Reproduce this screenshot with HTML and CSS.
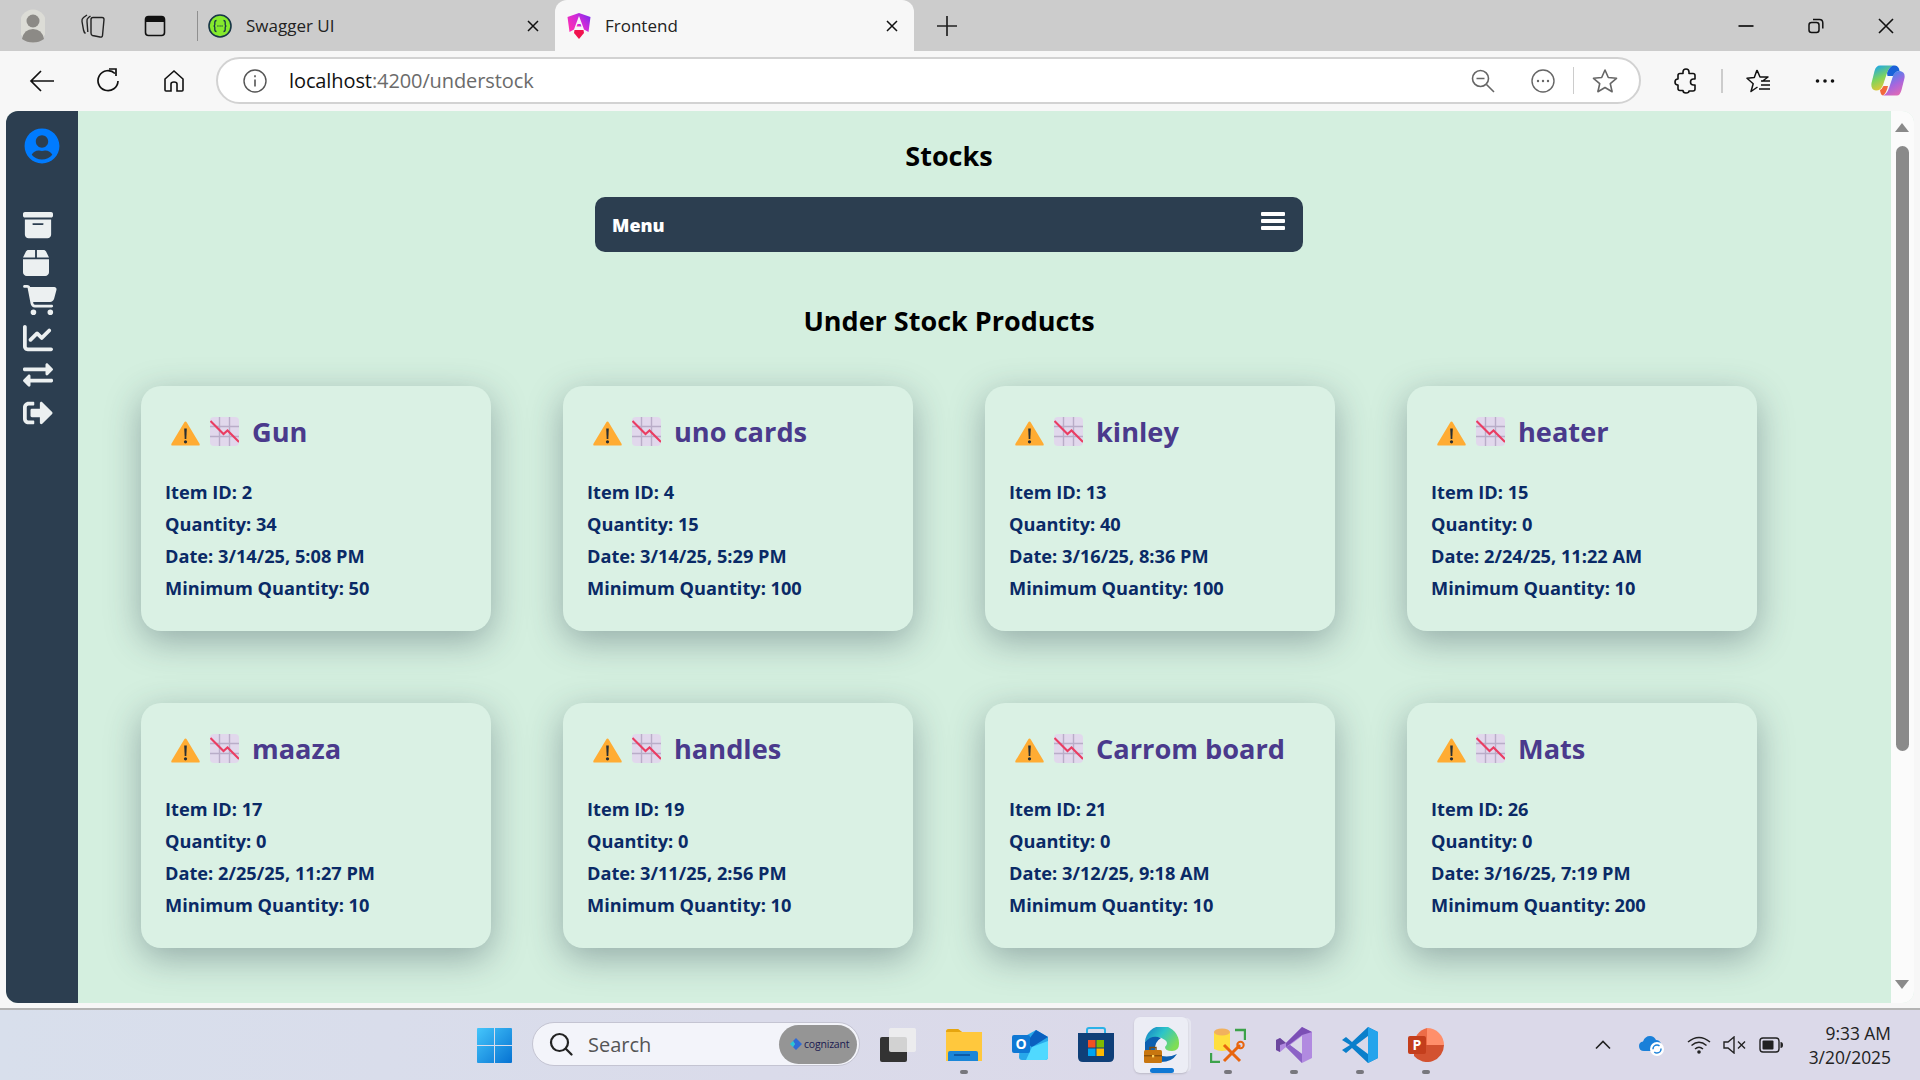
FILE: index.html
```html
<!DOCTYPE html>
<html lang="en">
<head>
  <meta charset="UTF-8">
  <meta name="viewport" content="width=device-width, initial-scale=1.0">
  <title>Frontend</title>
  <link rel="stylesheet" href="styles.css">
</head>
<body>
  <!-- shared icons for the cards -->
  <svg class="sprite" xmlns="http://www.w3.org/2000/svg">
    <symbol id="warn" viewBox="0 0 29 25">
      <path d="M14.5 0.5 Q15.2 0.5 15.8 1.6 L28.4 22.6 Q29.4 24.6 27.4 24.6 H1.6 Q-0.4 24.6 0.6 22.6 L13.2 1.6 Q13.8 0.5 14.5 0.5Z" fill="#ffac33"/>
      <path d="M13.2 7.5 h2.6 l-0.5 10.5 h-1.6z" fill="#292f33"/>
      <circle cx="14.5" cy="20.8" r="1.6" fill="#292f33"/>
    </symbol>
    <symbol id="drop" viewBox="0 0 29 29">
      <rect width="29" height="29" rx="4" fill="#e1d8ec"/>
      <path d="M9.5 0v29M19.5 0v29M0 9.5h29M0 19.5h29" stroke="#b9adc8" stroke-width="1.4" fill="none"/>
      <path d="M0.5 4 L13.5 17 L17.5 13.5 L29 25" stroke="#ea3d62" stroke-width="2.1" fill="none"/>
    </symbol>
  </svg>

  <div class="tabstrip">
    <div class="strip-btn first">
      <svg width="24" height="34" viewBox="0 0 24 34"><ellipse cx="12" cy="17" rx="14" ry="16.5" fill="#dcdcd6"/><circle cx="12" cy="12" r="6.5" fill="#8c8a86"/><path d="M1 30 Q3 20 12 20 Q21 20 23 30 Q18 33.5 12 33.5 Q6 33.5 1 30Z" fill="#8c8a86"/></svg>
    </div>
    <div class="strip-btn wide">
      <svg width="26" height="26" viewBox="0 0 26 26" fill="none" stroke="#222" stroke-width="1.4" stroke-linejoin="round"><path d="M11 6.5 Q11 4.5 13 4.5 H22 Q24 4.5 24 6.5 L22.5 22.5 Q22.3 24.5 20 24 L12.5 22.5 Q11 22 11 20Z"/><path d="M10.5 3 L8.5 4.5 Q6.5 6 7 8.5 L7.8 19"/><path d="M7 2 L3.5 4.5 Q1.5 6 2 8.5 L3.5 17 Q4 19.5 5.5 20.5"/></svg>
    </div>
    <div class="strip-btn tabs-btn">
      <svg width="22" height="22" viewBox="0 0 22 22"><rect x="1.5" y="1.5" width="19" height="19" rx="3" fill="none" stroke="#111" stroke-width="1.6"/><path d="M1.5 4.5 Q1.5 1.5 4.5 1.5 H17.5 Q20.5 1.5 20.5 4.5 V7 H1.5Z" fill="#111"/></svg>
    </div>
    <span class="strip-sep"></span>
    <div class="tab">
      <svg class="favicon" width="24" height="24" viewBox="0 0 24 24"><circle cx="12" cy="12" r="11" fill="#85ea2d" stroke="#173647" stroke-width="1.6"/><path d="M8.5 6.5 Q6.8 6.5 6.8 8.5 V10.5 Q6.8 12 5.6 12 Q6.8 12 6.8 13.5 V15.5 Q6.8 17.5 8.5 17.5M15.5 6.5 Q17.2 6.5 17.2 8.5 V10.5 Q17.2 12 18.4 12 Q17.2 12 17.2 13.5 V15.5 Q17.2 17.5 15.5 17.5" fill="none" stroke="#173647" stroke-width="1.3"/><path d="M9.5 12h.9M11.6 12h.9M13.6 12h.9" stroke="#173647" stroke-width="1.3"/></svg>
      <span class="tab-title">Swagger UI</span>
      <svg class="tab-x" width="14" height="14" viewBox="0 0 14 14"><path d="M2 2l10 10M12 2L2 12" stroke="#111" stroke-width="1.5"/></svg>
    </div>
    <div class="tab active">
      <svg class="favicon" width="24" height="28" viewBox="0 0 24 28">
        <defs><linearGradient id="ang" x1="0" y1="0.8" x2="1" y2="0.1"><stop offset="0" stop-color="#ff2fb0"/><stop offset="0.55" stop-color="#d02ad8"/><stop offset="1" stop-color="#7a2bf0"/></linearGradient></defs>
        <path d="M12 1 L0.5 5 L2.5 20 L7 17.5 L9 12 L12 4 L15 12 L17 17.5 L21.5 20 L23.5 5Z" fill="url(#ang)"/>
        <path d="M10.5 12 H13.5 L14.5 14.5 H9.5Z" fill="url(#ang)"/>
        <path d="M7.5 18 H16.5 L17 21 L12 27 L7 21Z" fill="#f0134f"/>
      </svg>
      <span class="tab-title">Frontend</span>
      <svg class="tab-x" width="14" height="14" viewBox="0 0 14 14"><path d="M2 2l10 10M12 2L2 12" stroke="#111" stroke-width="1.5"/></svg>
    </div>
    <div class="strip-btn plus">
      <svg width="22" height="22" viewBox="0 0 22 22"><path d="M11 1v20M1 11h20" stroke="#222" stroke-width="1.7"/></svg>
    </div>
    <div class="window-btns">
      <svg width="16" height="16" viewBox="0 0 16 16"><path d="M0.5 8h15" stroke="#111" stroke-width="1.7"/></svg>
      <svg width="16" height="16" viewBox="0 0 16 16" fill="none" stroke="#111" stroke-width="1.5"><rect x="1" y="4.5" width="10" height="10" rx="2.5"/><path d="M5 1.5 H11.5 Q14.8 1.5 14.8 5 V10.5"/></svg>
      <svg width="16" height="16" viewBox="0 0 16 16"><path d="M1 1l14 14M15 1L1 15" stroke="#111" stroke-width="1.6"/></svg>
    </div>
  </div>

  <div class="toolbar">
    <div class="tool-btn">
      <svg width="26" height="24" viewBox="0 0 26 24" fill="none" stroke="#111" stroke-width="1.7"><path d="M25 12H2M12 2L2 12l10 10"/></svg>
    </div>
    <div class="tool-btn">
      <svg width="24" height="26" viewBox="0 0 24 26" fill="none" stroke="#111" stroke-width="1.7"><path d="M19 5.5 A10 10 0 1 0 22 13"/><path d="M13 1 H20 V8"/></svg>
    </div>
    <div class="tool-btn">
      <svg width="24" height="24" viewBox="0 0 24 24" fill="none" stroke="#111" stroke-width="1.6"><path d="M3 10 L12 2 L21 10 V21 Q21 22 20 22 H15 V15 Q15 13 12 13 Q9 13 9 15 V22 H4 Q3 22 3 21Z"/></svg>
    </div>
    <div class="address">
      <svg class="addr-info" width="24" height="24" viewBox="0 0 24 24" fill="none" stroke="#555" stroke-width="1.4"><circle cx="12" cy="12" r="11"/><path d="M12 10.5v7M12 6.3v2" stroke-width="1.6"/></svg>
      <span class="url"><span class="url-host">localhost</span>:4200/understock</span>
      <div class="addr-icons">
        <svg width="24" height="24" viewBox="0 0 24 24" fill="none" stroke="#666" stroke-width="1.6"><circle cx="9.5" cy="9.5" r="8"/><path d="M5.5 9.5h8M15.5 15.5l7.5 7.5"/></svg>
        <svg class="dots-ring" width="24" height="24" viewBox="0 0 24 24"><circle cx="12" cy="12" r="11" fill="none" stroke="#666" stroke-width="1.4"/><circle cx="7" cy="12" r="1.2" fill="#666"/><circle cx="12" cy="12" r="1.2" fill="#666"/><circle cx="17" cy="12" r="1.2" fill="#666"/></svg>
        <span class="addr-sep"></span>
        <svg width="26" height="26" viewBox="0 0 26 26" fill="none" stroke="#666" stroke-width="1.6" stroke-linejoin="round"><path d="M13 2 L16.3 9.5 L24.5 10.3 L18.3 15.7 L20.1 23.7 L13 19.5 L5.9 23.7 L7.7 15.7 L1.5 10.3 L9.7 9.5Z"/></svg>
      </div>
    </div>
    <div class="tool-right">
      <svg class="ext" width="24" height="26" viewBox="0 0 24 26" fill="none" stroke="#111" stroke-width="1.6" stroke-linejoin="round"><path d="M9 4 Q9 1 12 1 Q15 1 15 4 V5.5 H19 Q21 5.5 21 7.5 V11 H19.5 Q16.5 11 16.5 14 Q16.5 17 19.5 17 H21 V21 Q21 23 19 23 H15 Q15 25 12 25 Q9 25 9 22.5 H6 Q4 22.5 4 20.5 V17 Q1 17 1 14 Q1 11 4 11 V7.5 Q4 5.5 6 5.5 H9Z"/></svg>
      <span class="tool-sep"></span>
      <svg class="favs" width="26" height="26" viewBox="0 0 26 26" fill="none" stroke="#111" stroke-width="1.5" stroke-linejoin="round"><path d="M11 2 L14 9 H22 L16 13.5 M11.5 19 L5 23.5 L7.2 15.7 L1 10.3 L8.3 9.5 L11 2M15 13h9M15 17h9M13 21h11"/></svg>
      <svg class="more" width="20" height="6" viewBox="0 0 20 6"><circle cx="2.5" cy="3" r="1.8" fill="#111"/><circle cx="10" cy="3" r="1.8" fill="#111"/><circle cx="17.5" cy="3" r="1.8" fill="#111"/></svg>
      <svg class="copilot" width="34" height="31" viewBox="0 0 34 31">
        <defs>
          <linearGradient id="cop1" x1="0.2" y1="0" x2="0.6" y2="1"><stop offset="0" stop-color="#1aa6ee"/><stop offset="0.5" stop-color="#7fd45c"/><stop offset="1" stop-color="#f6c42f"/></linearGradient>
          <linearGradient id="cop2" x1="0.3" y1="0" x2="0.8" y2="1"><stop offset="0" stop-color="#2f8df2"/><stop offset="0.55" stop-color="#a866dd"/><stop offset="1" stop-color="#e86ab0"/></linearGradient>
        </defs>
        <path d="M9 0.5 H22 Q18 2 16 8 L12 20 Q10 25.5 5 25.5 Q-0.5 25 0.5 18 L3.5 6 Q5 0.5 9 0.5Z" fill="url(#cop1)"/>
        <path d="M26 30.5 H12 Q16 29 18 23 L22 11 Q23.5 6 29 6 Q34.5 7 33.5 13 L30.5 25 Q29 30.5 26 30.5Z" fill="url(#cop2)"/>
        <path d="M9 25 Q11 24 12.5 21 L17 21 Q15.5 28 12 30.5 Q9.5 30 9 25Z" fill="#f2683c"/>
        <path d="M16 8 Q18 2 22 0.5 H24 Q28 1 28.5 6 Q24 6 22 11 H16.5Z" fill="#1a62d8"/>
      </svg>
    </div>
  </div>

  <div class="viewport">
    <nav class="sidebar">
      <svg class="side-avatar" width="36" height="36" viewBox="0 0 496 512"><path fill="#007bff" d="M248 8C111 8 0 119 0 256s111 248 248 248 248-111 248-248S385 8 248 8zm0 96c48.6 0 88 39.4 88 88s-39.4 88-88 88-88-39.4-88-88 39.4-88 88-88zm0 344c-58.7 0-111.3-26.6-146.5-68.2 18.8-35.4 55.6-59.8 98.5-59.8 2.4 0 4.8.4 7.1 1.1 13 4.2 26.6 6.9 40.9 6.9 14.3 0 28-2.7 40.9-6.9 2.3-.7 4.7-1.1 7.1-1.1 42.9 0 79.7 24.4 98.5 59.8C359.3 421.4 306.7 448 248 448z"/></svg>
      <div class="side-links">
        <svg width="30" height="30" viewBox="0 0 512 512"><path d="M32 32H480c17.7 0 32 14.3 32 32V96c0 17.7-14.3 32-32 32H32C14.3 128 0 113.7 0 96V64C0 46.3 14.3 32 32 32zm0 128H480V416c0 35.3-28.7 64-64 64H96c-35.3 0-64-28.7-64-64V160zm128 80c0 8.8 7.2 16 16 16H336c8.8 0 16-7.2 16-16s-7.2-16-16-16H176c-8.8 0-16 7.2-16 16z"/></svg>
        <svg width="26" height="30" viewBox="0 0 448 512"><path d="M50.7 58.5L0 160H208V32H93.7C75.5 32 58.9 42.3 50.7 58.5zM240 160H448L397.3 58.5C389.1 42.3 372.5 32 354.3 32H240V160zm208 32H0V416c0 35.3 28.7 64 64 64H384c35.3 0 64-28.7 64-64V192z"/></svg>
        <svg width="34" height="30" viewBox="0 0 576 512"><path d="M0 24C0 10.7 10.7 0 24 0H69.5c22 0 41.5 12.8 50.6 32h411c26.3 0 45.5 25 38.6 50.4l-41 152.3c-8.5 31.4-37 53.3-69.5 53.3H170.7l5.4 28.5c2.2 11.3 12.1 19.5 23.6 19.5H488c13.3 0 24 10.7 24 24s-10.7 24-24 24H199.7c-34.6 0-64.3-24.6-70.7-58.5L77.4 54.5c-.7-3.8-4-6.5-7.9-6.5H24C10.7 48 0 37.3 0 24zM128 464a48 48 0 1 1 96 0 48 48 0 1 1 -96 0zm336-48a48 48 0 1 1 0 96 48 48 0 1 1 0-96z"/></svg>
        <svg width="30" height="30" viewBox="0 0 512 512"><path d="M64 64c0-17.7-14.3-32-32-32S0 46.3 0 64V400c0 44.2 35.8 80 80 80H480c17.7 0 32-14.3 32-32s-14.3-32-32-32H80c-8.8 0-16-7.2-16-16V64zm406.6 86.6c12.5-12.5 12.5-32.8 0-45.3s-32.8-12.5-45.3 0L320 210.7l-57.4-57.4c-12.5-12.5-32.8-12.5-45.3 0l-112 112c-12.5 12.5-12.5 32.8 0 45.3s32.8 12.5 45.3 0L240 221.3l57.4 57.4c12.5 12.5 32.8 12.5 45.3 0l128-128z"/></svg>
        <svg width="30" height="30" viewBox="0 0 512 512"><path d="M0 168v-16c0-13.255 10.745-24 24-24h360V80c0-21.367 25.899-32.042 40.971-16.971l80 80c9.372 9.373 9.372 24.569 0 33.941l-80 80C409.956 271.982 384 261.456 384 240v-48H24c-13.255 0-24-10.745-24-24zm488 152H128v-48c0-21.314-25.862-32.08-40.971-16.971l-80 80c-9.372 9.373-9.372 24.569 0 33.941l80 80C102.057 463.997 128 453.437 128 432v-48h360c13.255 0 24-10.745 24-24v-16c0-13.255-10.745-24-24-24z"/></svg>
        <svg width="30" height="30" viewBox="0 0 512 512"><path d="M497 273L329 441c-15 15-41 4.5-41-17v-96H152c-13.3 0-24-10.7-24-24v-96c0-13.3 10.7-24 24-24h136V88c0-21.4 25.9-32 41-17l168 168c9.3 9.4 9.3 24.6 0 34zM192 436v-40c0-6.6-5.4-12-12-12H96c-17.7 0-32-14.3-32-32V160c0-17.7 14.3-32 32-32h84c6.6 0 12-5.4 12-12V76c0-6.6-5.4-12-12-12H96c-53 0-96 43-96 96v192c0 53 43 96 96 96h84c6.6 0 12-5.4 12-12z"/></svg>
      </div>
    </nav>

    <main class="content">
      <h2 class="page-title">Stocks</h2>
      <div class="menu-bar">
        <span class="menu-label">Menu</span>
        <span class="burger"><i></i><i></i><i></i></span>
      </div>
      <h2 class="section-title">Under Stock Products</h2>

      <div class="card-grid">
        <div class="card">
          <h3 class="card-title"><svg class="ic-warn"><use href="#warn"/></svg><svg class="ic-drop"><use href="#drop"/></svg>Gun</h3>
          <p>Item ID: 2</p><p>Quantity: 34</p><p>Date: 3/14/25, 5:08 PM</p><p>Minimum Quantity: 50</p>
        </div>
        <div class="card">
          <h3 class="card-title"><svg class="ic-warn"><use href="#warn"/></svg><svg class="ic-drop"><use href="#drop"/></svg>uno cards</h3>
          <p>Item ID: 4</p><p>Quantity: 15</p><p>Date: 3/14/25, 5:29 PM</p><p>Minimum Quantity: 100</p>
        </div>
        <div class="card">
          <h3 class="card-title"><svg class="ic-warn"><use href="#warn"/></svg><svg class="ic-drop"><use href="#drop"/></svg>kinley</h3>
          <p>Item ID: 13</p><p>Quantity: 40</p><p>Date: 3/16/25, 8:36 PM</p><p>Minimum Quantity: 100</p>
        </div>
        <div class="card">
          <h3 class="card-title"><svg class="ic-warn"><use href="#warn"/></svg><svg class="ic-drop"><use href="#drop"/></svg>heater</h3>
          <p>Item ID: 15</p><p>Quantity: 0</p><p>Date: 2/24/25, 11:22 AM</p><p>Minimum Quantity: 10</p>
        </div>
        <div class="card">
          <h3 class="card-title"><svg class="ic-warn"><use href="#warn"/></svg><svg class="ic-drop"><use href="#drop"/></svg>maaza</h3>
          <p>Item ID: 17</p><p>Quantity: 0</p><p>Date: 2/25/25, 11:27 PM</p><p>Minimum Quantity: 10</p>
        </div>
        <div class="card">
          <h3 class="card-title"><svg class="ic-warn"><use href="#warn"/></svg><svg class="ic-drop"><use href="#drop"/></svg>handles</h3>
          <p>Item ID: 19</p><p>Quantity: 0</p><p>Date: 3/11/25, 2:56 PM</p><p>Minimum Quantity: 10</p>
        </div>
        <div class="card">
          <h3 class="card-title"><svg class="ic-warn"><use href="#warn"/></svg><svg class="ic-drop"><use href="#drop"/></svg>Carrom board</h3>
          <p>Item ID: 21</p><p>Quantity: 0</p><p>Date: 3/12/25, 9:18 AM</p><p>Minimum Quantity: 10</p>
        </div>
        <div class="card">
          <h3 class="card-title"><svg class="ic-warn"><use href="#warn"/></svg><svg class="ic-drop"><use href="#drop"/></svg>Mats</h3>
          <p>Item ID: 26</p><p>Quantity: 0</p><p>Date: 3/16/25, 7:19 PM</p><p>Minimum Quantity: 200</p>
        </div>
      </div>
    </main>

    <div class="scrollbar">
      <span class="arrow-up"></span>
      <span class="thumb"></span>
      <span class="arrow-down"></span>
    </div>
  </div>

  <footer class="taskbar">
    <div class="task-item">
      <svg width="35" height="35" viewBox="0 0 35 35">
        <defs><linearGradient id="win" x1="0" y1="0" x2="1" y2="1"><stop offset="0" stop-color="#45c6fb"/><stop offset="1" stop-color="#0672d2"/></linearGradient></defs>
        <path d="M1 0H17V17H0V1Q0 0 1 0ZM18 0H34Q35 0 35 1V17H18ZM0 18H17V35H1Q0 35 0 34ZM18 18H35V34Q35 35 34 35H18Z" fill="url(#win)"/>
      </svg>
    </div>
    <div class="search">
      <svg width="24" height="24" viewBox="0 0 24 24" fill="none" stroke="#222" stroke-width="2.2"><circle cx="10.5" cy="10.5" r="8.5"/><path d="M16.8 16.8 L22.5 22.5" stroke-linecap="round"/></svg>
      <span class="search-text">Search</span>
      <span class="search-pill">
        <svg width="12" height="12" viewBox="0 0 12 12"><path d="M6 0L12 6L6 12L3 9L5 6L3 3Z" fill="#2f6bd6"/><path d="M3 3L0 6L3 9L5 6Z" fill="#26c6da"/></svg>
        <span class="pill-text">cognizant</span>
      </span>
    </div>
    <div class="task-item">
      <svg width="36" height="34" viewBox="0 0 36 34"><rect x="0" y="9" width="27" height="25" rx="2" fill="#333"/><rect x="9" y="0" width="27" height="24" rx="2" fill="#eeeeef" opacity="0.85"/></svg>
    </div>
    <div class="task-item running">
      <svg width="36" height="32" viewBox="0 0 36 32"><path d="M0 3 Q0 0 3 0 H12 L16 3 H36 V32 H0Z" fill="#ffc83d"/><path d="M0 3 Q0 0 3 0 H12 L16 3 H0Z" fill="#e6a50f"/><path d="M2 32 V24 Q2 22 4 22 H30 Q32 22 32 24 V32Z" fill="#1a86d8"/><path d="M8 26h16" stroke="#0c5aa6" stroke-width="2"/></svg>
    </div>
    <div class="task-item">
      <svg width="36" height="32" viewBox="0 0 36 32"><path d="M8 10 L24 1 L36 8 V28 Q36 31 33 31 H10 Q7 31 7 28Z" fill="#28a8ea"/><path d="M14 14 L24 1 L36 8 L20 18Z" fill="#0a5fbf"/><path d="M14 31 L20 18 L36 12 V28 Q36 31 33 31Z" fill="#50d9ff"/><rect x="0" y="6" width="18" height="18" rx="2" fill="#0f78d4"/><text x="9" y="20" class="app-letter" text-anchor="middle">O</text></svg>
    </div>
    <div class="task-item">
      <svg width="36" height="36" viewBox="0 0 36 36"><path d="M9 7 V3 Q9 1 11 1 H25 Q27 1 27 3 V7" fill="none" stroke="#2bb2e8" stroke-width="2"/><path d="M0 6 H36 V30 Q36 35 31 35 H5 Q0 35 0 30Z" fill="#0f3f78"/><rect x="10" y="13" width="7.5" height="7.5" fill="#f25022"/><rect x="18.5" y="13" width="7.5" height="7.5" fill="#7fba00"/><rect x="10" y="21.5" width="7.5" height="7.5" fill="#00a4ef"/><rect x="18.5" y="21.5" width="7.5" height="7.5" fill="#ffb900"/></svg>
    </div>
    <div class="task-item active-app">
      <svg width="36" height="36" viewBox="0 0 36 36">
        <defs><linearGradient id="edge" x1="0" y1="0" x2="1" y2="0.6"><stop offset="0" stop-color="#1278c8"/><stop offset="0.5" stop-color="#2dc4c8"/><stop offset="1" stop-color="#7fdd55"/></linearGradient></defs>
        <path d="M1 15 A17 17 0 0 1 35 17 Q35 24 28 24 Q21 24 21 20 Q25 16 21 13 Q12 6 1 15Z" fill="url(#edge)"/>
        <path d="M1 15 Q8 7 17 11 Q10 15 11 24 H1Z" fill="#0c5fb0"/>
        <path d="M13 27 Q22 32 33 27 Q28 35 17 35 H12Z" fill="#0c5fb0"/>
        <rect x="0" y="23" width="18" height="13" rx="1.5" fill="#c8760f"/><path d="M6 23v-2.5h6V23" fill="none" stroke="#7c4a0c" stroke-width="1.4"/><rect x="0" y="28" width="18" height="1.4" fill="#8c5208"/><rect x="8" y="28" width="2.2" height="2.4" fill="#ffd35c"/>
      </svg>
    </div>
    <div class="task-item running">
      <svg width="36" height="36" viewBox="0 0 36 36"><path d="M25 3h10v10M1 26v9h9" fill="none" stroke="#3ca24a" stroke-width="2.4"/><path d="M4 5 Q12 0 20 5 V22 Q12 26 4 22Z" fill="#ffdf3e"/><ellipse cx="12" cy="5" rx="8" ry="3.5" fill="#f1b15e"/><path d="M14 18 L30 34M30 18 L14 34" stroke="#e8650e" stroke-width="3"/><circle cx="30.5" cy="18" r="3.2" fill="none" stroke="#e8650e" stroke-width="2"/></svg>
    </div>
    <div class="task-item running">
      <svg width="36" height="36" viewBox="0 0 36 36"><path d="M26 0 L36 5 V31 L26 36 L10 20 L4 25 L0 23 V13 L4 11 L10 16Z" fill="#b18ae0"/><path d="M26 0 L36 5 L26 8 L10 20 L10 16Z" fill="#7b4fb5"/><path d="M0 13 L4 11 L10 16 L4 18 V25 L0 23Z" fill="#6c479e"/><path d="M26 9 V27 L14 18Z" fill="#dbd9e9"/><path d="M26 36 L10 20 L14 18 L26 27Z" fill="#8c63c6"/></svg>
    </div>
    <div class="task-item running">
      <svg width="36" height="36" viewBox="0 0 36 36"><path d="M26 0 L36 5 V31 L26 36 L10 21 L4 26 L0 23 L8 18 L0 13 L4 10 L10 15Z" fill="#0a7fcb"/><path d="M26 0 L36 5 V31 L26 36 V9 L26 27 Z" fill="#24a4ec"/><path d="M26 9 V27 L14 18Z" fill="#dbd9e9"/></svg>
    </div>
    <div class="task-item running">
      <svg width="36" height="34" viewBox="0 0 36 34"><path d="M19 0 A17 17 0 0 1 36 17 H19Z" fill="#ff8f6b"/><path d="M19 0 A17 17 0 0 0 6 17 H19Z" fill="#ed6c47"/><path d="M36 17 A17 17 0 0 1 6 28 V17Z" fill="#d35230"/><rect x="0" y="8" width="18" height="18" rx="2" fill="#c43e1c"/><text x="9" y="22" class="app-letter" text-anchor="middle">P</text></svg>
    </div>

    <div class="tray">
      <svg class="tray-chevron" width="16" height="10" viewBox="0 0 16 10"><path d="M1 8.5 L8 1.5 L15 8.5" fill="none" stroke="#222" stroke-width="1.6"/></svg>
      <svg class="tray-cloud" width="26" height="24" viewBox="0 0 26 24"><path d="M5 18 Q0 18 0 13 Q0 9 4 8.5 Q6 3 11 3 Q15 3 17 7 Q21 7 22 11 L14 18Z" fill="#1a80d9"/><circle cx="18" cy="16" r="7" fill="#fff"/><circle cx="18" cy="16" r="4" fill="none" stroke="#1a80d9" stroke-width="1.5" stroke-dasharray="9 3"/></svg>
      <svg class="tray-wifi" width="24" height="20" viewBox="0 0 24 20" fill="none" stroke="#222" stroke-width="1.5"><path d="M1 7 Q12 -2 23 7M4.5 10.5 Q12 4 19.5 10.5M8 14 Q12 10.5 16 14"/><circle cx="12" cy="17" r="1.8" fill="#222" stroke="none"/></svg>
      <svg class="tray-sound" width="24" height="18" viewBox="0 0 24 18" fill="none" stroke="#222" stroke-width="1.4"><path d="M1 6 H5 L11 1 V17 L5 12 H1Z"/><path d="M15 5.5l7 7M22 5.5l-7 7"/></svg>
      <svg class="tray-battery" width="24" height="16" viewBox="0 0 24 16"><rect x="1" y="1" width="19" height="14" rx="3" fill="none" stroke="#222" stroke-width="1.4"/><rect x="3.5" y="3.5" width="11" height="9" rx="1" fill="#222"/><path d="M21.5 5 Q24 5 24 8 Q24 11 21.5 11Z" fill="#222"/></svg>
      <div class="clock">
        <span>9:33 AM</span>
        <span>3/20/2025</span>
      </div>
    </div>
  </footer>
</body>
</html>
```

FILE: styles.css
```css
* {
  box-sizing: border-box;
}

html, body {
  margin: 0;
  height: 1080px;
  overflow: hidden;
}

body {
  display: flex;
  flex-direction: column;
  background-color: #f7f7f7;
  font-family: "Open Sans", "Noto Sans", sans-serif;
}

.sprite {
  display: none;
}

/* browser tabs */
.tabstrip {
  display: flex;
  align-items: center;
  height: 51px;
  background-color: #cccccc;
  padding-left: 9px;
}

.strip-btn {
  display: flex;
  align-items: center;
  justify-content: center;
  width: 48px;
  height: 51px;
}

.strip-btn.wide {
  width: 72px;
}

.strip-btn.tabs-btn {
  width: 52px;
}

.strip-btn.plus {
  width: 66px;
}

.strip-sep {
  width: 1px;
  height: 30px;
  background-color: #8f8f8f;
  margin-left: 16px;
  margin-right: 10px;
}

.tab {
  display: flex;
  align-items: center;
  width: 347px;
  height: 51px;
  padding-right: 15px;
}

.tab.active {
  width: 359px;
  background-color: #f7f7f7;
  border-radius: 12px 12px 0 0;
  padding-left: 12px;
  padding-right: 15px;
}

.favicon {
  flex: none;
}

.tab-title {
  flex: 1;
  margin-left: 14px;
  font-size: 17px;
  color: #222;
}

.window-btns {
  display: flex;
  gap: 54px;
  margin-left: auto;
  padding-right: 26px;
}

/* address row */
.toolbar {
  display: flex;
  align-items: center;
  height: 60px;
  padding-left: 9px;
  padding-bottom: 1px;
  background-color: #f7f7f7;
}

.tool-btn {
  display: flex;
  align-items: center;
  justify-content: center;
  width: 66px;
  height: 46px;
}

.address {
  display: flex;
  align-items: center;
  width: 1425px;
  height: 47px;
  margin-left: 9px;
  padding-left: 25px;
  padding-right: 21px;
  background-color: #fff;
  border: 2px solid #d2d2d2;
  border-radius: 24px;
}

.url {
  margin-left: 22px;
  font-size: 20px;
  letter-spacing: -0.1px;
  color: #6b6b6b;
}

.url-host {
  color: #111;
}

.addr-icons {
  display: flex;
  align-items: center;
  margin-left: auto;
}

.dots-ring {
  margin-left: 36px;
}

.addr-sep {
  width: 1px;
  height: 27px;
  background-color: #ccc;
  margin-left: 18px;
  margin-right: 18px;
}

.tool-right {
  display: flex;
  align-items: center;
  margin-left: 33px;
}

.tool-sep {
  width: 2px;
  height: 24px;
  background-color: #ccc;
  margin-left: 23px;
  margin-right: 23px;
}

.more {
  margin-left: 43px;
}

.copilot {
  margin-left: 36px;
}

/* page area */
.viewport {
  display: flex;
  height: 892px;
  margin-left: 6px;
  margin-right: 6px;
  background-color: #d4efdf;
  border-radius: 12px;
  overflow: hidden;
}

.sidebar {
  flex: none;
  display: flex;
  flex-direction: column;
  width: 72px;
  background-color: #2c3e50;
  padding-left: 17px;
  padding-top: 17px;
}

.side-avatar {
  margin-left: 1px;
}

.side-links {
  display: flex;
  flex-direction: column;
  margin-top: 46px;
}

.side-links svg {
  display: block;
  height: 30px;
  margin-bottom: 7.5px;
  fill: #ecf0f1;
}

.content {
  flex: none;
  width: 1742px;
}

.page-title {
  margin: 26px 0 0;
  height: 38px;
  line-height: 38px;
  text-align: center;
  font-size: 27px;
  font-weight: 700;
  color: #000;
}

.menu-bar {
  display: flex;
  align-items: center;
  justify-content: space-between;
  width: 708px;
  height: 55px;
  margin: 22px auto 0;
  padding: 0 18px 0 17px;
  background-color: #2c3e50;
  border-radius: 10px;
}

.menu-label {
  font-size: 18px;
  font-weight: 800;
  color: #fff;
}

.burger {
  display: flex;
  flex-direction: column;
  gap: 3px;
  width: 24px;
  margin-top: -8px;
}

.burger i {
  display: block;
  height: 4px;
  background-color: #fff;
  border-radius: 1px;
}

.section-title {
  margin: 49px 0 0;
  height: 40px;
  line-height: 40px;
  text-align: center;
  font-size: 27px;
  font-weight: 700;
  color: #000;
}

.card-grid {
  display: grid;
  grid-template-columns: repeat(4, 350px);
  gap: 72px;
  justify-content: center;
  margin-top: 45px;
}

.card {
  height: 245px;
  padding: 18px 24px 0;
  background-color: #daf1e4;
  border-radius: 20px;
  box-shadow: 0 10px 35px rgba(44, 62, 80, 0.38);
}

.card-title {
  display: flex;
  align-items: center;
  height: 54px;
  margin: 0 0 18px;
  font-size: 27.2px;
  font-weight: 700;
  color: #4a3a8c;
}

.ic-warn {
  width: 29px;
  height: 25px;
  margin-left: 6px;
  margin-top: 4px;
}

.ic-drop {
  width: 29px;
  height: 29px;
  margin-left: 10px;
  margin-right: 13px;
}

.card p {
  margin: 0;
  height: 32px;
  line-height: 32px;
  font-size: 18.2px;
  font-weight: 700;
  color: #0a2a66;
}

/* scrollbar */
.scrollbar {
  flex: none;
  position: relative;
  width: 23px;
  margin-left: auto;
  background-color: #fbfbfb;
}

.thumb {
  position: absolute;
  left: 5px;
  top: 35px;
  width: 13px;
  height: 605px;
  background-color: #8a8a8a;
  border-radius: 7px;
}

.arrow-up,
.arrow-down {
  position: absolute;
  left: 4px;
  width: 0;
  height: 0;
  border-left: 7.5px solid transparent;
  border-right: 7.5px solid transparent;
}

.arrow-up {
  top: 12px;
  border-bottom: 9px solid #8a8a8a;
}

.arrow-down {
  bottom: 14px;
  border-top: 9px solid #8a8a8a;
}

/* windows taskbar */
.taskbar {
  display: flex;
  align-items: center;
  height: 72px;
  margin-top: 5px;
  padding-left: 461px;
  border-top: 2px solid #b4b4b4;
  background: linear-gradient(90deg, #d8dfec, #dbd9e9 60%);
}

.task-item {
  position: relative;
  display: flex;
  align-items: center;
  justify-content: center;
  flex: none;
  width: 66px;
  height: 56px;
}

.running::after {
  content: "";
  position: absolute;
  left: 29px;
  bottom: -1px;
  width: 8px;
  height: 4px;
  border-radius: 2px;
  background-color: #77777d;
}

.active-app::before {
  content: "";
  position: absolute;
  inset: 0 7px 0 5px;
  background-color: #ecedf5;
  border-radius: 6px;
  box-shadow: 0 1px 2px rgba(0, 0, 0, 0.15), 4px 0 0 -1px #e6e6f0;
}

.active-app::after {
  content: "";
  position: absolute;
  left: 21px;
  bottom: 0;
  width: 24px;
  height: 5px;
  border-radius: 3px;
  background-color: #0f78d4;
}

.active-app svg {
  position: relative;
}

.app-letter {
  font-family: "Open Sans", sans-serif;
  font-size: 14px;
  font-weight: 700;
  fill: #fff;
}

.search {
  display: flex;
  align-items: center;
  flex: none;
  width: 328px;
  height: 44px;
  margin: 0 5px 2px;
  padding-left: 16px;
  padding-right: 2px;
  background-color: #f3f4fa;
  border: 1px solid #c4c4d2;
  border-radius: 22px;
}

.search-text {
  margin-left: 15px;
  font-size: 20px;
  color: #555;
}

.search-pill {
  display: flex;
  align-items: center;
  gap: 2px;
  width: 78px;
  height: 39px;
  margin-left: auto;
  padding-left: 11px;
  background-color: #959595;
  border-radius: 20px;
}

.pill-text {
  font-size: 10.5px;
  letter-spacing: -0.2px;
  color: #1a1a50;
}

.tray {
  display: flex;
  align-items: center;
  margin-left: auto;
  padding-right: 29px;
}

.tray-cloud {
  margin-left: 27.6px;
}

.tray-wifi {
  margin-left: 21.6px;
}

.tray-sound {
  margin-left: 12px;
}

.tray-battery {
  margin-left: 12.5px;
}

.clock {
  display: flex;
  flex-direction: column;
  align-items: flex-end;
  width: 95px;
  margin-left: 13px;
  font-size: 17.4px;
  line-height: 24px;
  color: #222;
}
```
